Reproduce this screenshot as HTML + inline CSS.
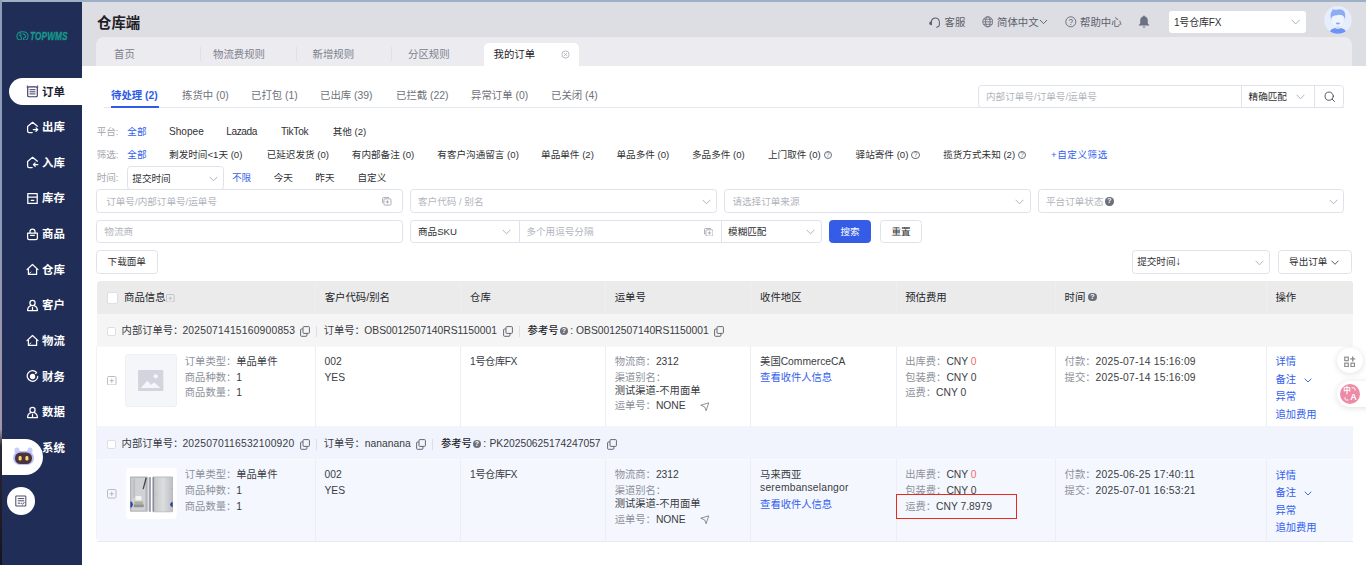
<!DOCTYPE html>
<html lang="zh-CN">
<head>
<meta charset="utf-8">
<title>仓库端 - 我的订单</title>
<style>
*{box-sizing:border-box;margin:0;padding:0}
html,body{width:1366px;height:565px;overflow:hidden;background:#fff}
body{font-family:"Liberation Sans","Noto Sans CJK SC",sans-serif;font-size:12px;color:#303133;position:relative;line-height:1}
.a{position:absolute;white-space:nowrap}
svg{display:block}
/* window edges */
#edgeT{left:0;top:0;width:1366px;height:2px;background:#9fafc6}
#edgeL{left:0;top:0;width:2px;height:565px;background:linear-gradient(to bottom,#8c9cb9 0,#8c9cb9 35%,#a097a8 70%,#a097a8 76%,#2a2833 79%,#15131e 100%)}
/* sidebar */
#side{left:2px;top:2px;width:80px;height:563px;background:#202d57}
.mi{left:2px;width:80px;height:36px;color:#fff;font-weight:700;font-size:14px}
.mi .t{left:40px;top:10px;line-height:16px;font-size:11.4px}
.mi svg{position:absolute;left:23.5px;top:11.5px}
#miact{left:9px;top:77.5px;width:73px;height:27px;background:#fff;border-radius:13.5px 0 0 13.5px}
/* header */
#head{left:82px;top:2px;width:1284px;height:64px;background:#dddee3}
#tabbar{left:96px;top:37px;width:1255.5px;height:29px;background:#ebebf0;border-radius:8px 8px 0 0}
.tab{top:37px;height:29px;line-height:35.5px;font-size:10.4px;color:#7d818d}
.tsep{top:47px;width:1px;height:14px;background:#dfe0e7}
#tabact{left:484px;top:43px;width:95px;height:23px;background:#fff;border-radius:5px 5px 0 0}
.hr{top:11.6px;height:22px;line-height:22px;font-size:10.4px;color:#5c606d}
/* sub tabs */
.st{top:86.7px;height:18px;line-height:18px;font-size:10.4px;color:#6e7179}
.lab{color:#a3a6ad!important}
.bl{color:#3360ec!important}
.f{font-size:9.6px;line-height:16px;height:16px;color:#303133}
.inp{height:23px;border:1px solid #dfe2ea;border-radius:3.5px;background:#fff;font-size:9.6px;line-height:21px;color:#b4b8c0;padding-left:0}
.ph{font-size:9.6px;line-height:21.5px;color:#b1b5bd}
.dk{color:#303133}
.chv{fill:none;stroke:#a8abb2;stroke-width:.9}
.qo{width:8.2px;height:8.2px;border-radius:50%;border:.8px solid #6b6f7a;color:#6b6f7a;font-size:6.5px;line-height:6.8px;text-align:center}
.la{font-size:10.1px}
.btn{height:23px;border:1px solid #dfe2ea;border-radius:3.5px;background:#fff;font-size:9.6px;line-height:21px;color:#303133;text-align:center}
.sel{color:#303133}
/* table */
.th{top:281px;height:33px;line-height:33.5px;font-size:10.4px;color:#24262b;font-weight:400}
.vl{width:1px;background:#ebeef5}
.c{font-size:10.3px;line-height:16px;color:#3a3d44}
.g{color:#8d919b}
.sm{font-size:9.6px}
.oh{font-size:10.3px;line-height:16px;color:#383b42}
.n{letter-spacing:.21px}
.q{width:8.2px;height:8.2px;border-radius:50%;background:#6b6f7a;color:#fff;font-size:7px;line-height:8.4px;text-align:center;font-weight:700}
.cb{width:11px;height:11px;border:1px solid #dcdfe6;border-radius:2px;background:#fff}
</style>
</head>
<body>
<div class="a" id="edgeT"></div>
<div class="a" id="head"></div>
<div class="a" id="side"></div>
<div class="a" id="edgeL"></div>
<div class="a" id="miact"></div>
<div class="a mi" style="top:73.5px;color:#1d2233;"><svg width="13" height="13" viewBox="0 0 13 13"><g stroke="#3a3a63" stroke-width="1.25" fill="none" stroke-linecap="round" stroke-linejoin="round"><rect x="1.7" y="1.9" width="9.6" height="9.8" rx="1.3" stroke-width="1.15"/><path d="M1.3 2.6V0.8M11.7 2.6V0.8" stroke-width=".9"/><path d="M3.9 4.7H9.1M3.9 6.8H9.1M3.9 8.9H9.1" stroke-width="1"/></g></svg><span class="a t">订单</span></div>
<div class="a mi" style="top:109.1px;"><svg width="13" height="13" viewBox="0 0 13 13"><g stroke="#fff" stroke-width="1.25" fill="none" stroke-linecap="round" stroke-linejoin="round"><path d="M6.2 11.6H3.2Q1.6 11.6 1.6 10V5.4L6.6 1.3L11.4 5.2"/><path d="M7.3 8.6H11.6M10 6.9L11.8 8.6L10 10.3"/></g></svg><span class="a t">出库</span></div>
<div class="a mi" style="top:144.8px;"><svg width="13" height="13" viewBox="0 0 13 13"><g stroke="#fff" stroke-width="1.25" fill="none" stroke-linecap="round" stroke-linejoin="round"><path d="M6.2 11.6H3.2Q1.6 11.6 1.6 10V5.4L6.6 1.3L11.4 5.2"/><path d="M7.6 8.6H11.8M9.2 6.9L7.4 8.6L9.2 10.3"/></g></svg><span class="a t">入库</span></div>
<div class="a mi" style="top:180.4px;"><svg width="13" height="13" viewBox="0 0 13 13"><g stroke="#fff" stroke-width="1.25" fill="none" stroke-linecap="round" stroke-linejoin="round"><path d="M1.8 1.6H11.2V11.4H1.8Z"/><path d="M1.8 5.2H11.2"/><path d="M5.2 8.3H7.8"/></g></svg><span class="a t">库存</span></div>
<div class="a mi" style="top:216.0px;"><svg width="13" height="13" viewBox="0 0 13 13"><g stroke="#fff" stroke-width="1.25" fill="none" stroke-linecap="round" stroke-linejoin="round"><path d="M1.6 5H11.4V10Q11.4 11.6 9.8 11.6H3.2Q1.6 11.6 1.6 10Z"/><path d="M4 5V3.6Q4 1.2 6.5 1.2Q9 1.2 9 3.6V5"/><path d="M4.6 7.4H8.4" stroke-width="1.1"/></g></svg><span class="a t">商品</span></div>
<div class="a mi" style="top:251.6px;"><svg width="13" height="13" viewBox="0 0 13 13"><g stroke="#fff" stroke-width="1.25" fill="none" stroke-linecap="round" stroke-linejoin="round"><path d="M2.4 6V11.4H10.6V6"/><path d="M1 6.6L6.5 1.5L12 6.6"/><path d="M3.4 10.4L4.8 9" stroke-width="1"/></g></svg><span class="a t">仓库</span></div>
<div class="a mi" style="top:287.3px;"><svg width="13" height="13" viewBox="0 0 13 13"><g stroke="#fff" stroke-width="1.25" fill="none" stroke-linecap="round" stroke-linejoin="round"><circle cx="6.5" cy="3.9" r="2.6"/><path d="M1.6 11.5Q1.6 7.6 5 6.6M11.4 11.5Q11.4 7.6 8 6.6M1.6 11.5H11.4M6.5 8.4V11"/></g></svg><span class="a t">客户</span></div>
<div class="a mi" style="top:322.9px;"><svg width="13" height="13" viewBox="0 0 13 13"><g stroke="#fff" stroke-width="1.25" fill="none" stroke-linecap="round" stroke-linejoin="round"><path d="M2.4 6V11.4H10.6V6"/><path d="M1 6.6L6.5 1.5L12 6.6"/><path d="M3.4 10.4L4.8 9" stroke-width="1"/></g></svg><span class="a t">物流</span></div>
<div class="a mi" style="top:358.5px;"><svg width="13" height="13" viewBox="0 0 13 13"><g stroke="#fff" stroke-width="1.25" fill="none" stroke-linecap="round" stroke-linejoin="round"><path d="M10.6 2.6A5.3 5.3 0 1 0 11.8 6.5"/><circle cx="6.5" cy="6.5" r="2.1" fill="#fff"/><path d="M9.6 1.4L10.8 2.8L9.2 3.6" stroke-width="1"/></g></svg><span class="a t">财务</span></div>
<div class="a mi" style="top:394.2px;"><svg width="13" height="13" viewBox="0 0 13 13"><g stroke="#fff" stroke-width="1.25" fill="none" stroke-linecap="round" stroke-linejoin="round"><circle cx="6.5" cy="3.9" r="2.6"/><path d="M1.6 11.5Q1.6 7.6 5 6.6M11.4 11.5Q11.4 7.6 8 6.6M1.6 11.5H11.4M6.5 8.4V11"/></g></svg><span class="a t">数据</span></div>
<div class="a mi" style="top:429.8px;"><span class="a t">系统</span></div>

<!-- logo -->
<svg class="a" style="left:16.4px;top:30.6px" width="13" height="9.8" viewBox="0 0 14 11"><g fill="none" stroke="#16988a" stroke-width="1.2" stroke-linecap="round"><path d="M3 10.2Q0.7 9 0.7 6Q0.7 0.8 7 0.8Q13.3 0.8 13.3 6Q13.3 9 11 10.2H8.2V7.6"/><path d="M3 10.2H5.6V7.2Q5.6 4.6 3.4 4.6"/><path d="M7.4 3.2Q9.8 3.2 10.4 5.6Q10.7 7.4 9.2 7.6"/><path d="M4.2 2.4L5.4 3.4"/></g></svg>
<div class="a" style="left:29.8px;top:30.2px;font-size:10.3px;line-height:13px;font-weight:700;font-style:italic;color:#16988a;-webkit-text-stroke:.35px #16988a;transform:scaleX(.795);transform-origin:0 0;letter-spacing:.2px">TOPWMS</div>
<!-- robot bubble -->
<div class="a" style="left:2px;top:439px;width:41px;height:36px;background:#fff;border-radius:0 18px 18px 0"></div>
<svg class="a" style="left:12px;top:445px" width="23" height="22" viewBox="0 0 23 22"><ellipse cx="5" cy="5.5" rx="2.6" ry="3" fill="#c9cdfb"/><ellipse cx="18" cy="5.5" rx="2.6" ry="3" fill="#c9cdfb"/><rect x="1" y="6" width="21" height="14" rx="7" fill="#b9c0f7"/><rect x="3" y="7.5" width="17" height="11.5" rx="5.5" fill="#4a3340"/><rect x="6.6" y="11" width="3" height="4.6" rx="1.4" fill="#ffd769"/><rect x="13.4" y="11" width="3" height="4.6" rx="1.4" fill="#ffd769"/></svg>
<!-- round button -->
<div class="a" style="left:7px;top:486.5px;width:28px;height:28px;border-radius:50%;background:#fff"></div>
<svg class="a" style="left:15px;top:494.5px" width="12" height="12" viewBox="0 0 12 12"><g fill="none" stroke="#4b4b66" stroke-width="1" stroke-linecap="round" stroke-linejoin="round"><path d="M1.2 1H10.8V11H1.2Z"/><path d="M3.2 3.6H8.8M3.2 5.8H8.8M3.2 8.2H5"/><path d="M6.4 8.2L7.5 9.3L9.2 7.4"/></g></svg>
<!-- header -->
<div class="a" style="left:97px;top:13px;font-size:14.4px;line-height:20px;font-weight:700;color:#1f2026">仓库端</div>
<div class="a" id="tabbar"></div>
<div class="a tsep" style="left:200px"></div><div class="a tsep" style="left:296px"></div><div class="a tsep" style="left:391px"></div>
<div class="a" id="tabact"></div>
<div class="a tab" style="left:114px">首页</div>
<div class="a tab" style="left:213px">物流费规则</div>
<div class="a tab" style="left:312.5px">新增规则</div>
<div class="a tab" style="left:408px">分区规则</div>
<div class="a tab" style="left:493.5px;color:#1f2026">我的订单</div>
<svg class="a" style="left:561px;top:50px" width="9" height="9" viewBox="0 0 9 9"><g fill="none" stroke="#a3a6b0" stroke-width=".8"><circle cx="4.5" cy="4.5" r="3.6"/><path d="M3.1 3.1L5.9 5.9M5.9 3.1L3.1 5.9"/></g></svg>
<!-- header right -->
<svg class="a" style="left:928.6px;top:15.6px" width="12.6" height="12.6" viewBox="0 0 12 12"><g fill="none" stroke="#5f6370" stroke-width="1" stroke-linecap="round"><path d="M2.3 7.4V5.6A3.8 3.8 0 0 1 9.7 4.6"/><path d="M9.9 5.2V8.2Q9.9 10.4 7.2 10.8"/><path d="M2.3 5.4Q.7 5.4 .7 6.8Q.7 8.2 2.3 8.2Z" fill="#5f6370"/></g></svg>
<div class="a hr" style="left:944.5px">客服</div>
<svg class="a" style="left:981.8px;top:16px" width="11.6" height="11.6" viewBox="0 0 12 12"><g fill="none" stroke="#5f6370" stroke-width=".8"><circle cx="6" cy="6" r="5.2"/><ellipse cx="6" cy="6" rx="2.3" ry="5.2"/><path d="M.8 6H11.2M1.6 3.4H10.4M1.6 8.6H10.4"/></g></svg>
<div class="a hr" style="left:997px">简体中文</div>
<svg class="a" style="left:1039px;top:19px" width="9" height="6" viewBox="0 0 9 6"><path d="M1 1L4.5 4.6L8 1" fill="none" stroke="#555a68" stroke-width=".9"/></svg>
<svg class="a" style="left:1065.3px;top:16px" width="11.6" height="11.6" viewBox="0 0 12 12"><circle cx="6" cy="6" r="5.2" fill="none" stroke="#5f6370" stroke-width=".9"/><text x="6" y="9" text-anchor="middle" font-family="Liberation Sans,sans-serif" font-size="8.5" fill="#5f6370">?</text></svg>
<div class="a hr" style="left:1080px">帮助中心</div>
<svg class="a" style="left:1138px;top:15px" width="12" height="13" viewBox="0 0 12 13"><path d="M6 .6Q6.9 .6 6.9 1.6Q9.8 2.4 9.8 5.6V8.4L11.2 10V10.6H.8V10L2.2 8.4V5.6Q2.2 2.4 5.1 1.6Q5.1 .6 6 .6ZM4.6 11.4H7.4Q7.2 12.6 6 12.6Q4.8 12.6 4.6 11.4Z" fill="#6b7082"/></svg>
<div class="a" style="left:1169px;top:11px;width:137px;height:22px;background:#fff;border-radius:3px"></div>
<div class="a hr" style="left:1174px;color:#303133;font-size:10px;letter-spacing:-.2px">1号仓库FX</div>
<svg class="a chv" style="left:1291px;top:18.8px" width="9.4" height="6.2" viewBox="0 0 9 6"><path d="M.6 .8L4.5 4.8L8.4 .8"/></svg>
<!-- avatar -->
<svg class="a" style="left:1323.8px;top:6.2px" width="27.8" height="27.8" viewBox="0 0 28 28"><defs><clipPath id="avc"><circle cx="14" cy="14" r="13.9"/></clipPath></defs><circle cx="14" cy="14" r="13.9" fill="#e6edfd"/><g clip-path="url(#avc)"><path d="M5.2 29Q5.2 22 14 22Q22.8 22 22.8 29Z" fill="#6b94f4"/><rect x="12" y="19" width="4" height="4" fill="#d5e0fc"/><path d="M8.2 12.5Q8.2 7 14 7Q19.8 7 19.8 12.5Q19.8 20.6 14 20.6Q8.2 20.6 8.2 12.5Z" fill="#eff3fe"/><path d="M7 13.6Q5.6 6.4 8.6 4.6L8 3.2Q11 4 14 3.4Q18 2.8 20 5Q22.2 7.6 21 13.6L19.8 10.4Q17 8.6 14 9Q10.4 9.2 8.4 10.6Z" fill="#8dabf6"/><path d="M11.8 17Q14 16 16.2 17Q15.6 18.6 14 18.6Q12.4 18.6 11.8 17Z" fill="#7fa1f5"/><ellipse cx="7.4" cy="13.8" rx=".9" ry="1.6" fill="#dfe8fd"/><ellipse cx="20.6" cy="13.8" rx=".9" ry="1.6" fill="#dfe8fd"/></g></svg>

<!-- sub tabs -->
<div class="a" style="left:104px;top:107px;width:1240px;height:1px;background:#e4e7ed"></div>
<div class="a" style="left:111px;top:106px;width:48px;height:2px;background:#2f5bea"></div>
<div class="a st" style="left:111px;color:#2f5bea;font-weight:700">待处理 (2)</div>
<div class="a st" style="left:182px">拣货中 (0)</div>
<div class="a st" style="left:251px">已打包 (1)</div>
<div class="a st" style="left:320px">已出库 (39)</div>
<div class="a st" style="left:396px">已拦截 (22)</div>
<div class="a st" style="left:471px">异常订单 (0)</div>
<div class="a st" style="left:551px">已关闭 (4)</div>
<!-- top search -->
<div class="a" style="left:978px;top:85px;width:366px;height:23px;border:1px solid #dfe2ea;border-radius:3.5px;background:#fff"></div>
<div class="a" style="left:1241px;top:86px;width:1px;height:21px;background:#dfe2ea"></div>
<div class="a" style="left:1314px;top:86px;width:1px;height:21px;background:#dfe2ea"></div>
<div class="a ph" style="left:986px;top:86px">内部订单号/订单号/运单号</div>
<div class="a ph dk" style="left:1248.6px;top:86px">精确匹配</div>
<svg class="a chv" style="left:1296.3px;top:94px" width="9" height="6" viewBox="0 0 9 6"><path d="M.6 .8L4.5 4.8L8.4 .8"/></svg>
<svg class="a" style="left:1323.5px;top:91px" width="11.5" height="11.5" viewBox="0 0 12 12"><g fill="none" stroke="#50535c" stroke-width="1" stroke-linecap="round"><circle cx="5.4" cy="5.4" r="4.3"/><path d="M8.6 8.6L10.9 10.9"/></g></svg>
<!-- filter row: platform -->
<div class="a f lab" style="left:96.7px;top:124px">平台:</div>
<div class="a f bl" style="left:127.3px;top:124px">全部</div>
<div class="a f la" style="left:169px;top:124px">Shopee</div>
<div class="a f la" style="left:226.3px;top:124px;letter-spacing:-.4px">Lazada</div>
<div class="a f la" style="left:281px;top:124px;letter-spacing:-.25px">TikTok</div>
<div class="a f" style="left:332.7px;top:124px">其他 (2)</div>
<!-- filter row: screen -->
<div class="a f lab" style="left:96.7px;top:147px">筛选:</div>
<div class="a f bl" style="left:127.3px;top:147px">全部</div>
<div class="a f" style="left:169.1px;top:147px">剩发时间&lt;1天 (0)</div>
<div class="a f" style="left:266.7px;top:147px">已延迟发货 (0)</div>
<div class="a f" style="left:351.8px;top:147px">有内部备注 (0)</div>
<div class="a f" style="left:437.3px;top:147px">有客户沟通留言 (0)</div>
<div class="a f" style="left:541.1px;top:147px">单品单件 (2)</div>
<div class="a f" style="left:616.5px;top:147px">单品多件 (0)</div>
<div class="a f" style="left:692px;top:147px">多品多件 (0)</div>
<div class="a f" style="left:768px;top:147px">上门取件 (0)</div>
<div class="a qo" style="left:823.7px;top:151px">?</div>
<div class="a f" style="left:855.6px;top:147px">驿站寄件 (0)</div>
<div class="a qo" style="left:911.4px;top:151px">?</div>
<div class="a f" style="left:943.2px;top:147px">揽货方式未知 (2)</div>
<div class="a qo" style="left:1018px;top:151px">?</div>
<div class="a f bl" style="left:1051px;top:147px;letter-spacing:.55px">+自定义筛选</div>
<!-- filter row: time -->
<div class="a f lab" style="left:96.7px;top:170px">时间:</div>
<div class="a inp" style="left:127px;top:166px;width:97px;height:23.5px"></div>
<div class="a ph dk" style="left:132.3px;top:167.5px">提交时间</div>
<svg class="a chv" style="left:209px;top:175.5px" width="9" height="6" viewBox="0 0 9 6"><path d="M.6 .8L4.5 4.8L8.4 .8"/></svg>
<div class="a f bl" style="left:232px;top:170px">不限</div>
<div class="a f" style="left:273.7px;top:170px">今天</div>
<div class="a f" style="left:315.3px;top:170px">昨天</div>
<div class="a f" style="left:357.5px;top:170px">自定义</div>
<!-- inputs row 1 -->
<div class="a inp" style="left:96px;top:189px;width:307px;height:24px"></div>
<div class="a ph" style="left:106.2px;top:190.5px">订单号/内部订单号/运单号</div>
<svg class="a" style="left:382.4px;top:197px" width="9.5" height="8.6" viewBox="0 0 9.5 8.6"><g fill="none" stroke="#9a9da6" stroke-width=".8"><path d="M.5 6.2V1.6Q.5 .5 1.6 .5H7"/><rect x="1.9" y="1.8" width="7.1" height="6.3" rx="1.1"/><path d="M3.7 4.95H7.2M5.45 3.3V6.6"/></g></svg>
<div class="a inp" style="left:410px;top:189px;width:307px;height:24px"></div>
<div class="a ph" style="left:418px;top:190.5px">客户代码 / 别名</div>
<svg class="a chv" style="left:702px;top:198.5px" width="9" height="6" viewBox="0 0 9 6"><path d="M.6 .8L4.5 4.8L8.4 .8"/></svg>
<div class="a inp" style="left:724px;top:189px;width:306.5px;height:24px"></div>
<div class="a ph" style="left:732.4px;top:190.5px">请选择订单来源</div>
<svg class="a chv" style="left:1015px;top:198.5px" width="9" height="6" viewBox="0 0 9 6"><path d="M.6 .8L4.5 4.8L8.4 .8"/></svg>
<div class="a inp" style="left:1038px;top:189px;width:306px;height:24px"></div>
<div class="a ph" style="left:1046px;top:190.5px">平台订单状态</div>
<div class="a q" style="left:1105.2px;top:197.2px;width:8.4px;height:8.4px;line-height:8.6px">?</div>
<svg class="a chv" style="left:1328.5px;top:198.5px" width="9" height="6" viewBox="0 0 9 6"><path d="M.6 .8L4.5 4.8L8.4 .8"/></svg>
<!-- inputs row 2 -->
<div class="a inp" style="left:96px;top:220px;width:307px"></div>
<div class="a ph" style="left:104.3px;top:221px">物流商</div>
<div class="a inp" style="left:410px;top:220px;width:411.5px"></div>
<div class="a" style="left:519px;top:221px;width:1px;height:21px;background:#dfe2ea"></div>
<div class="a" style="left:721px;top:221px;width:1px;height:21px;background:#dfe2ea"></div>
<div class="a ph dk" style="left:418px;top:221px">商品SKU</div>
<svg class="a chv" style="left:501.5px;top:229px" width="9" height="6" viewBox="0 0 9 6"><path d="M.6 .8L4.5 4.8L8.4 .8"/></svg>
<div class="a ph" style="left:526.4px;top:221px">多个用逗号分隔</div>
<svg class="a" style="left:703.6px;top:227.5px" width="9.5" height="8.6" viewBox="0 0 9.5 8.6"><g fill="none" stroke="#9a9da6" stroke-width=".8"><path d="M.5 6.2V1.6Q.5 .5 1.6 .5H7"/><rect x="1.9" y="1.8" width="7.1" height="6.3" rx="1.1"/><path d="M3.7 4.95H7.2M5.45 3.3V6.6"/></g></svg>
<div class="a ph dk" style="left:728.1px;top:221px">模糊匹配</div>
<svg class="a chv" style="left:806.3px;top:229px" width="9" height="6" viewBox="0 0 9 6"><path d="M.6 .8L4.5 4.8L8.4 .8"/></svg>
<div class="a btn" style="left:829px;top:220px;width:42px;background:#345ce6;border-color:#345ce6;color:#fff">搜索</div>
<div class="a btn" style="left:880px;top:220px;width:42px">重置</div>
<!-- row 3 -->
<div class="a btn" style="left:96px;top:250px;width:61.5px;height:23.5px">下载面单</div>
<div class="a inp" style="left:1132px;top:250px;width:138px;height:23.5px"></div>
<div class="a ph dk" style="left:1137.2px;top:251px">提交时间<span style="font-size:11.5px;line-height:1">↓</span></div>
<svg class="a chv" style="left:1254.5px;top:259.5px" width="9" height="6" viewBox="0 0 9 6"><path d="M.6 .8L4.5 4.8L8.4 .8"/></svg>
<div class="a btn" style="left:1277.5px;top:250px;width:74px;height:23.5px"></div>
<div class="a ph dk" style="left:1289.1px;top:251px">导出订单</div>
<svg class="a chv" style="left:1331.4px;top:260px;stroke:#303133" width="8" height="5.4" viewBox="0 0 9 6"><path d="M.6 .8L4.5 4.8L8.4 .8"/></svg>

<!-- table -->
<div class="a" style="left:97px;top:281px;width:1256px;height:33px;background:#ebebeb;border-radius:4px 3px 0 0"></div>
<div class="a" style="left:97px;top:314px;width:1256px;height:32px;background:#f5f5f5"></div>
<div class="a" style="left:97px;top:427px;width:1256px;height:33px;background:#f1f4fd"></div><div class="a" style="left:97px;top:460px;width:1256px;height:81px;background:#f4f7fe;border-radius:0 0 4px 4px"></div><div class="a" style="left:96px;top:346px;width:1px;height:193px;background:#f1f2f7"></div>
<div class="a" style="left:97px;top:426px;width:1256px;height:1px;background:#f3f5fb"></div><div class="a" style="left:97px;top:346px;width:1256px;height:1px;background:#fafafa"></div>
<div class="a" style="left:97px;top:541px;width:1256px;height:1px;background:#e6e9f2"></div>
<div class="a" style="left:97px;top:459px;width:1256px;height:1px;background:#f8faff"></div>
<!-- col lines -->
<div class="a vl" style="left:315px;top:346px;height:81px"></div><div class="a vl" style="left:460px;top:346px;height:81px"></div><div class="a vl" style="left:605px;top:346px;height:81px"></div><div class="a vl" style="left:750px;top:346px;height:81px"></div><div class="a vl" style="left:896px;top:346px;height:81px"></div><div class="a vl" style="left:1055px;top:346px;height:81px"></div><div class="a vl" style="left:1266px;top:346px;height:81px"></div>
<div class="a vl" style="left:315px;top:459px;height:82px"></div><div class="a vl" style="left:460px;top:459px;height:82px"></div><div class="a vl" style="left:605px;top:459px;height:82px"></div><div class="a vl" style="left:750px;top:459px;height:82px"></div><div class="a vl" style="left:896px;top:459px;height:82px"></div><div class="a vl" style="left:1055px;top:459px;height:82px"></div><div class="a vl" style="left:1266px;top:459px;height:82px"></div>
<!-- head -->
<div class="a" style="left:315px;top:281px;width:1px;height:33px;background:#efefef"></div><div class="a" style="left:460px;top:281px;width:1px;height:33px;background:#efefef"></div><div class="a" style="left:605px;top:281px;width:1px;height:33px;background:#efefef"></div><div class="a" style="left:750px;top:281px;width:1px;height:33px;background:#efefef"></div><div class="a" style="left:896px;top:281px;width:1px;height:33px;background:#efefef"></div><div class="a" style="left:1055px;top:281px;width:1px;height:33px;background:#efefef"></div><div class="a" style="left:1266px;top:281px;width:1px;height:33px;background:#efefef"></div>
<div class="a cb" style="left:106.5px;top:292px;width:11.5px;height:11.5px"></div>
<div class="a th" style="left:124.1px">商品信息</div>
<svg class="a" style="left:166px;top:293.5px" width="8.6" height="8.6" viewBox="0 0 9 9"><g fill="none" stroke="#b4b7bf" stroke-width=".8"><rect x=".5" y=".5" width="8" height="8" rx="1.2"/><path d="M2.6 4.5H6.4M4.5 2.6V6.4"/></g></svg>
<div class="a th" style="left:324.7px">客户代码/别名</div>
<div class="a th" style="left:470px">仓库</div>
<div class="a th" style="left:614.7px">运单号</div>
<div class="a th" style="left:760.1px">收件地区</div>
<div class="a th" style="left:905.2px">预估费用</div>
<div class="a th" style="left:1064.6px">时间</div>
<div class="a q" style="left:1088.2px;top:292.6px;width:8.6px;height:8.6px;line-height:8.8px">?</div>
<div class="a th" style="left:1275.4px">操作</div>
<div class="a cb" style="left:106.5px;top:326.5px;width:9.5px;height:9.5px"></div>
<div class="a oh" style="left:121.6px;top:323px">内部订单号：</div>
<div class="a oh n" style="left:182.4px;top:323px">2025071415160900853</div>
<svg class="a" style="left:300px;top:325.5px" width="10" height="11" viewBox="0 0 10 11"><g fill="none" stroke="#4b4f5c" stroke-width=".85"><rect x="3" y=".6" width="6.4" height="6.8" rx=".9"/><path d="M2.8 3H1.5Q.6 3 .6 3.9V9.4Q.6 10.3 1.5 10.3H6Q6.9 10.3 6.9 9.4V7.6"/></g></svg>
<div class="a" style="left:316px;top:325.5px;width:1px;height:11px;background:#dcdfe6"></div>
<div class="a oh" style="left:323.7px;top:323px">订单号：</div>
<div class="a oh" style="left:364.3px;top:323px">OBS0012507140RS1150001</div>
<svg class="a" style="left:503.2px;top:325.5px" width="10" height="11" viewBox="0 0 10 11"><g fill="none" stroke="#4b4f5c" stroke-width=".85"><rect x="3" y=".6" width="6.4" height="6.8" rx=".9"/><path d="M2.8 3H1.5Q.6 3 .6 3.9V9.4Q.6 10.3 1.5 10.3H6Q6.9 10.3 6.9 9.4V7.6"/></g></svg>
<div class="a" style="left:519.4px;top:325.5px;width:1px;height:11px;background:#dcdfe6"></div>
<div class="a oh" style="left:527.6px;top:323px;font-weight:500;color:#24262b">参考号</div>
<div class="a q" style="left:559.7px;top:327px">?</div>
<div class="a oh" style="left:570.3px;top:323px">:</div>
<div class="a oh" style="left:576.1px;top:323px">OBS0012507140RS1150001</div>
<svg class="a" style="left:713.5px;top:325.5px" width="10" height="11" viewBox="0 0 10 11"><g fill="none" stroke="#4b4f5c" stroke-width=".85"><rect x="3" y=".6" width="6.4" height="6.8" rx=".9"/><path d="M2.8 3H1.5Q.6 3 .6 3.9V9.4Q.6 10.3 1.5 10.3H6Q6.9 10.3 6.9 9.4V7.6"/></g></svg>
<svg class="a" style="left:107px;top:375.7px" width="9.5" height="9.5" viewBox="0 0 9.5 9.5"><g fill="none" stroke="#a8abb2" stroke-width=".8"><rect x=".5" y=".5" width="8.5" height="8.5" rx="1.2"/><path d="M2.7 4.75H6.8M4.75 2.7V6.8"/></g></svg>
<div class="a" style="left:125px;top:354px;width:52px;height:52.5px;background:#f5f6fa;border:1px solid #eff0f5;border-radius:3px"></div>
<svg class="a" style="left:138.3px;top:369.7px" width="25.4" height="21.4" viewBox="0 0 26 22"><rect width="26" height="22" rx="1" fill="#d3d5de"/><path d="M3 18.5L9.5 11L13.5 15.5L16.5 12.5L23 18.5Z" fill="#f5f6fa"/><circle cx="18.2" cy="6.5" r="2.2" fill="#f5f6fa"/></svg>
<div class="a c" style="left:184.8px;top:353.6px"><span class="g">订单类型：</span>单品单件</div>
<div class="a c" style="left:184.8px;top:369.5px"><span class="g">商品种数：</span>1</div>
<div class="a c" style="left:184.8px;top:385.4px"><span class="g">商品数量：</span>1</div>
<div class="a c" style="left:324.5px;top:353.6px">002</div>
<div class="a c" style="left:324.5px;top:369.5px">YES</div>
<div class="a c" style="left:470.1px;top:353.6px;letter-spacing:-.5px">1号仓库FX</div>
<div class="a c" style="left:614.7px;top:353.6px"><span class="g">物流商：</span>2312</div>
<div class="a c g" style="left:614.7px;top:369.5px">渠道别名：</div>
<div class="a c" style="left:614.7px;top:382.70000000000005px">测试渠道-不用面单</div>
<div class="a c" style="left:614.7px;top:398.40000000000003px"><span class="g">运单号：</span>NONE</div>
<svg class="a" style="left:699.5px;top:401.6px" width="9.5" height="9.5" viewBox="0 0 10 10"><path d="M.8 3.4L9.2 .9L6.4 9.2L5 5.2Z" fill="none" stroke="#6b6f7a" stroke-width=".8" stroke-linejoin="round"/></svg>
<div class="a c" style="left:760.1px;top:353.6px">美国CommerceCA</div>
<div class="a c bl" style="left:760.1px;top:370.3px">查看收件人信息</div>
<div class="a c" style="left:905.2px;top:353.6px"><span class="g">出库费：</span>CNY <span style="color:#f56c6c">0</span></div>
<div class="a c" style="left:905.2px;top:369.5px"><span class="g">包装费：</span>CNY 0</div>
<div class="a c" style="left:905.2px;top:385.40000000000003px"><span class="g">运费：</span>CNY 0</div>
<div class="a c" style="left:1064.6px;top:353.6px"><span class="g">付款：</span><span class="n" style="letter-spacing:.25px">2025-07-14 15:16:09</span></div>
<div class="a c" style="left:1064.6px;top:369.5px"><span class="g">提交：</span><span class="n" style="letter-spacing:.25px">2025-07-14 15:16:09</span></div>
<div class="a c bl" style="left:1275.4px;top:354.1px">详情</div>
<div class="a c bl" style="left:1275.4px;top:371.6px">备注</div>
<div class="a c bl" style="left:1275.4px;top:389.0px">异常</div>
<div class="a c bl" style="left:1275.4px;top:406.5px">追加费用</div>
<svg class="a" style="left:1303.5px;top:377.6px" width="8" height="5" viewBox="0 0 8 5"><path d="M.7 .7L4 4L7.3 .7" fill="none" stroke="#2f5bea" stroke-width=".9"/></svg>
<div class="a cb" style="left:106.5px;top:439.5px;width:9.5px;height:9.5px"></div>
<div class="a oh" style="left:121.6px;top:436px">内部订单号：</div>
<div class="a oh n" style="left:182.4px;top:436px">2025070116532100920</div>
<svg class="a" style="left:300px;top:438.5px" width="10" height="11" viewBox="0 0 10 11"><g fill="none" stroke="#4b4f5c" stroke-width=".85"><rect x="3" y=".6" width="6.4" height="6.8" rx=".9"/><path d="M2.8 3H1.5Q.6 3 .6 3.9V9.4Q.6 10.3 1.5 10.3H6Q6.9 10.3 6.9 9.4V7.6"/></g></svg>
<div class="a" style="left:316px;top:438.5px;width:1px;height:11px;background:#dcdfe6"></div>
<div class="a oh" style="left:323.7px;top:436px">订单号：</div>
<div class="a oh" style="left:364.8px;top:436px">nananana</div>
<svg class="a" style="left:416.3px;top:438.5px" width="10" height="11" viewBox="0 0 10 11"><g fill="none" stroke="#4b4f5c" stroke-width=".85"><rect x="3" y=".6" width="6.4" height="6.8" rx=".9"/><path d="M2.8 3H1.5Q.6 3 .6 3.9V9.4Q.6 10.3 1.5 10.3H6Q6.9 10.3 6.9 9.4V7.6"/></g></svg>
<div class="a" style="left:432.0px;top:438.5px;width:1px;height:11px;background:#dcdfe6"></div>
<div class="a oh" style="left:441px;top:436px;font-weight:500;color:#24262b">参考号</div>
<div class="a q" style="left:472.8px;top:440px">?</div>
<div class="a oh" style="left:483.3px;top:436px">:</div>
<div class="a oh" style="left:489.5px;top:436px">PK20250625174247057</div>
<svg class="a" style="left:607px;top:438.5px" width="10" height="11" viewBox="0 0 10 11"><g fill="none" stroke="#4b4f5c" stroke-width=".85"><rect x="3" y=".6" width="6.4" height="6.8" rx=".9"/><path d="M2.8 3H1.5Q.6 3 .6 3.9V9.4Q.6 10.3 1.5 10.3H6Q6.9 10.3 6.9 9.4V7.6"/></g></svg>
<svg class="a" style="left:107px;top:489.4px" width="9.5" height="9.5" viewBox="0 0 9.5 9.5"><g fill="none" stroke="#a8abb2" stroke-width=".8"><rect x=".5" y=".5" width="8.5" height="8.5" rx="1.2"/><path d="M2.7 4.75H6.8M4.75 2.7V6.8"/></g></svg>
<svg class="a" style="left:125.5px;top:468.2px" width="51" height="51" viewBox="187 83 316 320"><rect x="187" y="83" width="316" height="320" rx="18" fill="#fff"/><defs><linearGradient id="pg1" x1="0" y1="0" x2="1" y2="0"><stop offset="0" stop-color="#c4c6c8"/><stop offset=".5" stop-color="#dcdddf"/><stop offset="1" stop-color="#bfc1c4"/></linearGradient></defs><rect x="210" y="136" width="112" height="222" rx="5" fill="#b4b6b9"/><rect x="219" y="145" width="88" height="205" fill="#cfd1d3"/><rect x="228" y="150" width="14" height="120" fill="#bdbfc2"/><path d="M308 142L316 146L296 216L289 214Z" fill="#3f4146"/><rect x="244" y="258" width="38" height="28" rx="3" fill="#f4f4f4"/><rect x="238" y="294" width="54" height="14" fill="#a9b08f"/><rect x="234" y="311" width="62" height="18" fill="#8f9296"/><path d="M213 292Q228 296 228 312Q228 328 213 332Z" fill="#2d3e9b"/><rect x="322" y="140" width="8" height="216" fill="#dfe0e2"/><rect x="331" y="140" width="9" height="218" fill="#7d80a0"/><rect x="352" y="136" width="128" height="224" rx="6" fill="#b9bbbe"/><rect x="362" y="142" width="112" height="214" rx="4" fill="url(#pg1)"/><rect x="352" y="140" width="9" height="216" fill="#8a8c98"/><path d="M478 294Q462 298 462 312Q462 326 478 330Z" fill="#2d3e9b"/><circle cx="372" cy="250" r="2.5" fill="#999"/><circle cx="470" cy="210" r="2.5" fill="#999"/></svg>
<div class="a c" style="left:184.8px;top:467.3px"><span class="g">订单类型：</span>单品单件</div>
<div class="a c" style="left:184.8px;top:483.2px"><span class="g">商品种数：</span>1</div>
<div class="a c" style="left:184.8px;top:499.1px"><span class="g">商品数量：</span>1</div>
<div class="a c" style="left:324.5px;top:467.3px">002</div>
<div class="a c" style="left:324.5px;top:483.2px">YES</div>
<div class="a c" style="left:470.1px;top:467.3px;letter-spacing:-.5px">1号仓库FX</div>
<div class="a c" style="left:614.7px;top:467.3px"><span class="g">物流商：</span>2312</div>
<div class="a c g" style="left:614.7px;top:483.2px">渠道别名：</div>
<div class="a c" style="left:614.7px;top:496.40000000000003px">测试渠道-不用面单</div>
<div class="a c" style="left:614.7px;top:512.1px"><span class="g">运单号：</span>NONE</div>
<svg class="a" style="left:699.5px;top:515.3px" width="9.5" height="9.5" viewBox="0 0 10 10"><path d="M.8 3.4L9.2 .9L6.4 9.2L5 5.2Z" fill="none" stroke="#6b6f7a" stroke-width=".8" stroke-linejoin="round"/></svg>
<div class="a c" style="left:760.1px;top:467.3px">马来西亚</div>
<div class="a c" style="left:760.1px;top:480.2px;letter-spacing:.2px">serembanselangor</div>
<div class="a c bl" style="left:760.1px;top:497.1px">查看收件人信息</div>
<div class="a c" style="left:905.2px;top:467.3px"><span class="g">出库费：</span>CNY <span style="color:#f56c6c">0</span></div>
<div class="a c" style="left:905.2px;top:483.2px"><span class="g">包装费：</span>CNY 0</div>
<div class="a c" style="left:905.2px;top:499.1px"><span class="g">运费：</span>CNY 7.8979</div>
<div class="a c" style="left:1064.6px;top:467.3px"><span class="g">付款：</span><span class="n" style="letter-spacing:.25px">2025-06-25 17:40:11</span></div>
<div class="a c" style="left:1064.6px;top:483.2px"><span class="g">提交：</span><span class="n" style="letter-spacing:.25px">2025-07-01 16:53:21</span></div>
<div class="a c bl" style="left:1275.4px;top:467.8px">详情</div>
<div class="a c bl" style="left:1275.4px;top:485.2px">备注</div>
<div class="a c bl" style="left:1275.4px;top:502.7px">异常</div>
<div class="a c bl" style="left:1275.4px;top:520.1px">追加费用</div>
<svg class="a" style="left:1303.5px;top:491.2px" width="8" height="5" viewBox="0 0 8 5"><path d="M.7 .7L4 4L7.3 .7" fill="none" stroke="#2f5bea" stroke-width=".9"/></svg>

<!-- red annotation -->
<div class="a" style="left:896px;top:494px;width:121px;height:24.5px;border:1.5px solid #e8291c"></div>
<!-- floating tools -->
<div class="a" style="left:1336.5px;top:381px;width:40px;height:26px;border-radius:13px;background:#fff;box-shadow:0 1px 6px rgba(0,0,0,.13)"></div>
<div class="a" style="left:1337px;top:347.6px;width:25.6px;height:25.6px;border-radius:50%;background:#fff;box-shadow:0 1px 6px rgba(0,0,0,.13)"></div>
<svg class="a" style="left:1344px;top:355.5px" width="11.6" height="11.6" viewBox="0 0 12 12"><g fill="none" stroke="#8b8b8b" stroke-width="1.2"><rect x=".8" y="1.2" width="3.6" height="3.6"/><rect x=".8" y="7.4" width="3.6" height="3.6"/><rect x="7.2" y="7.4" width="3.6" height="3.6"/><path d="M9 .4V5.6M6.4 3H11.6" stroke-width="1.4"/></g></svg>
<div class="a" style="left:1339.8px;top:383.8px;width:20.4px;height:20.4px;border-radius:50%;background:#ed8aa6"></div>
<div class="a" style="left:1343.2px;top:386.8px;font-size:7.5px;line-height:8px;color:#fff;font-weight:700">中</div>
<div class="a" style="left:1350.2px;top:393px;font-size:9px;line-height:9px;color:#fff;font-weight:700">A</div>
<svg class="a" style="left:1343px;top:386px" width="14" height="16" viewBox="0 0 14 16"><g fill="none" stroke="#fff" stroke-width="1"><path d="M8.6 1.8H10.6Q12 1.8 12 3.2V4.6"/><path d="M5.4 14H3.4Q2 14 2 12.6V11.2"/></g></svg>

</body>
</html>
